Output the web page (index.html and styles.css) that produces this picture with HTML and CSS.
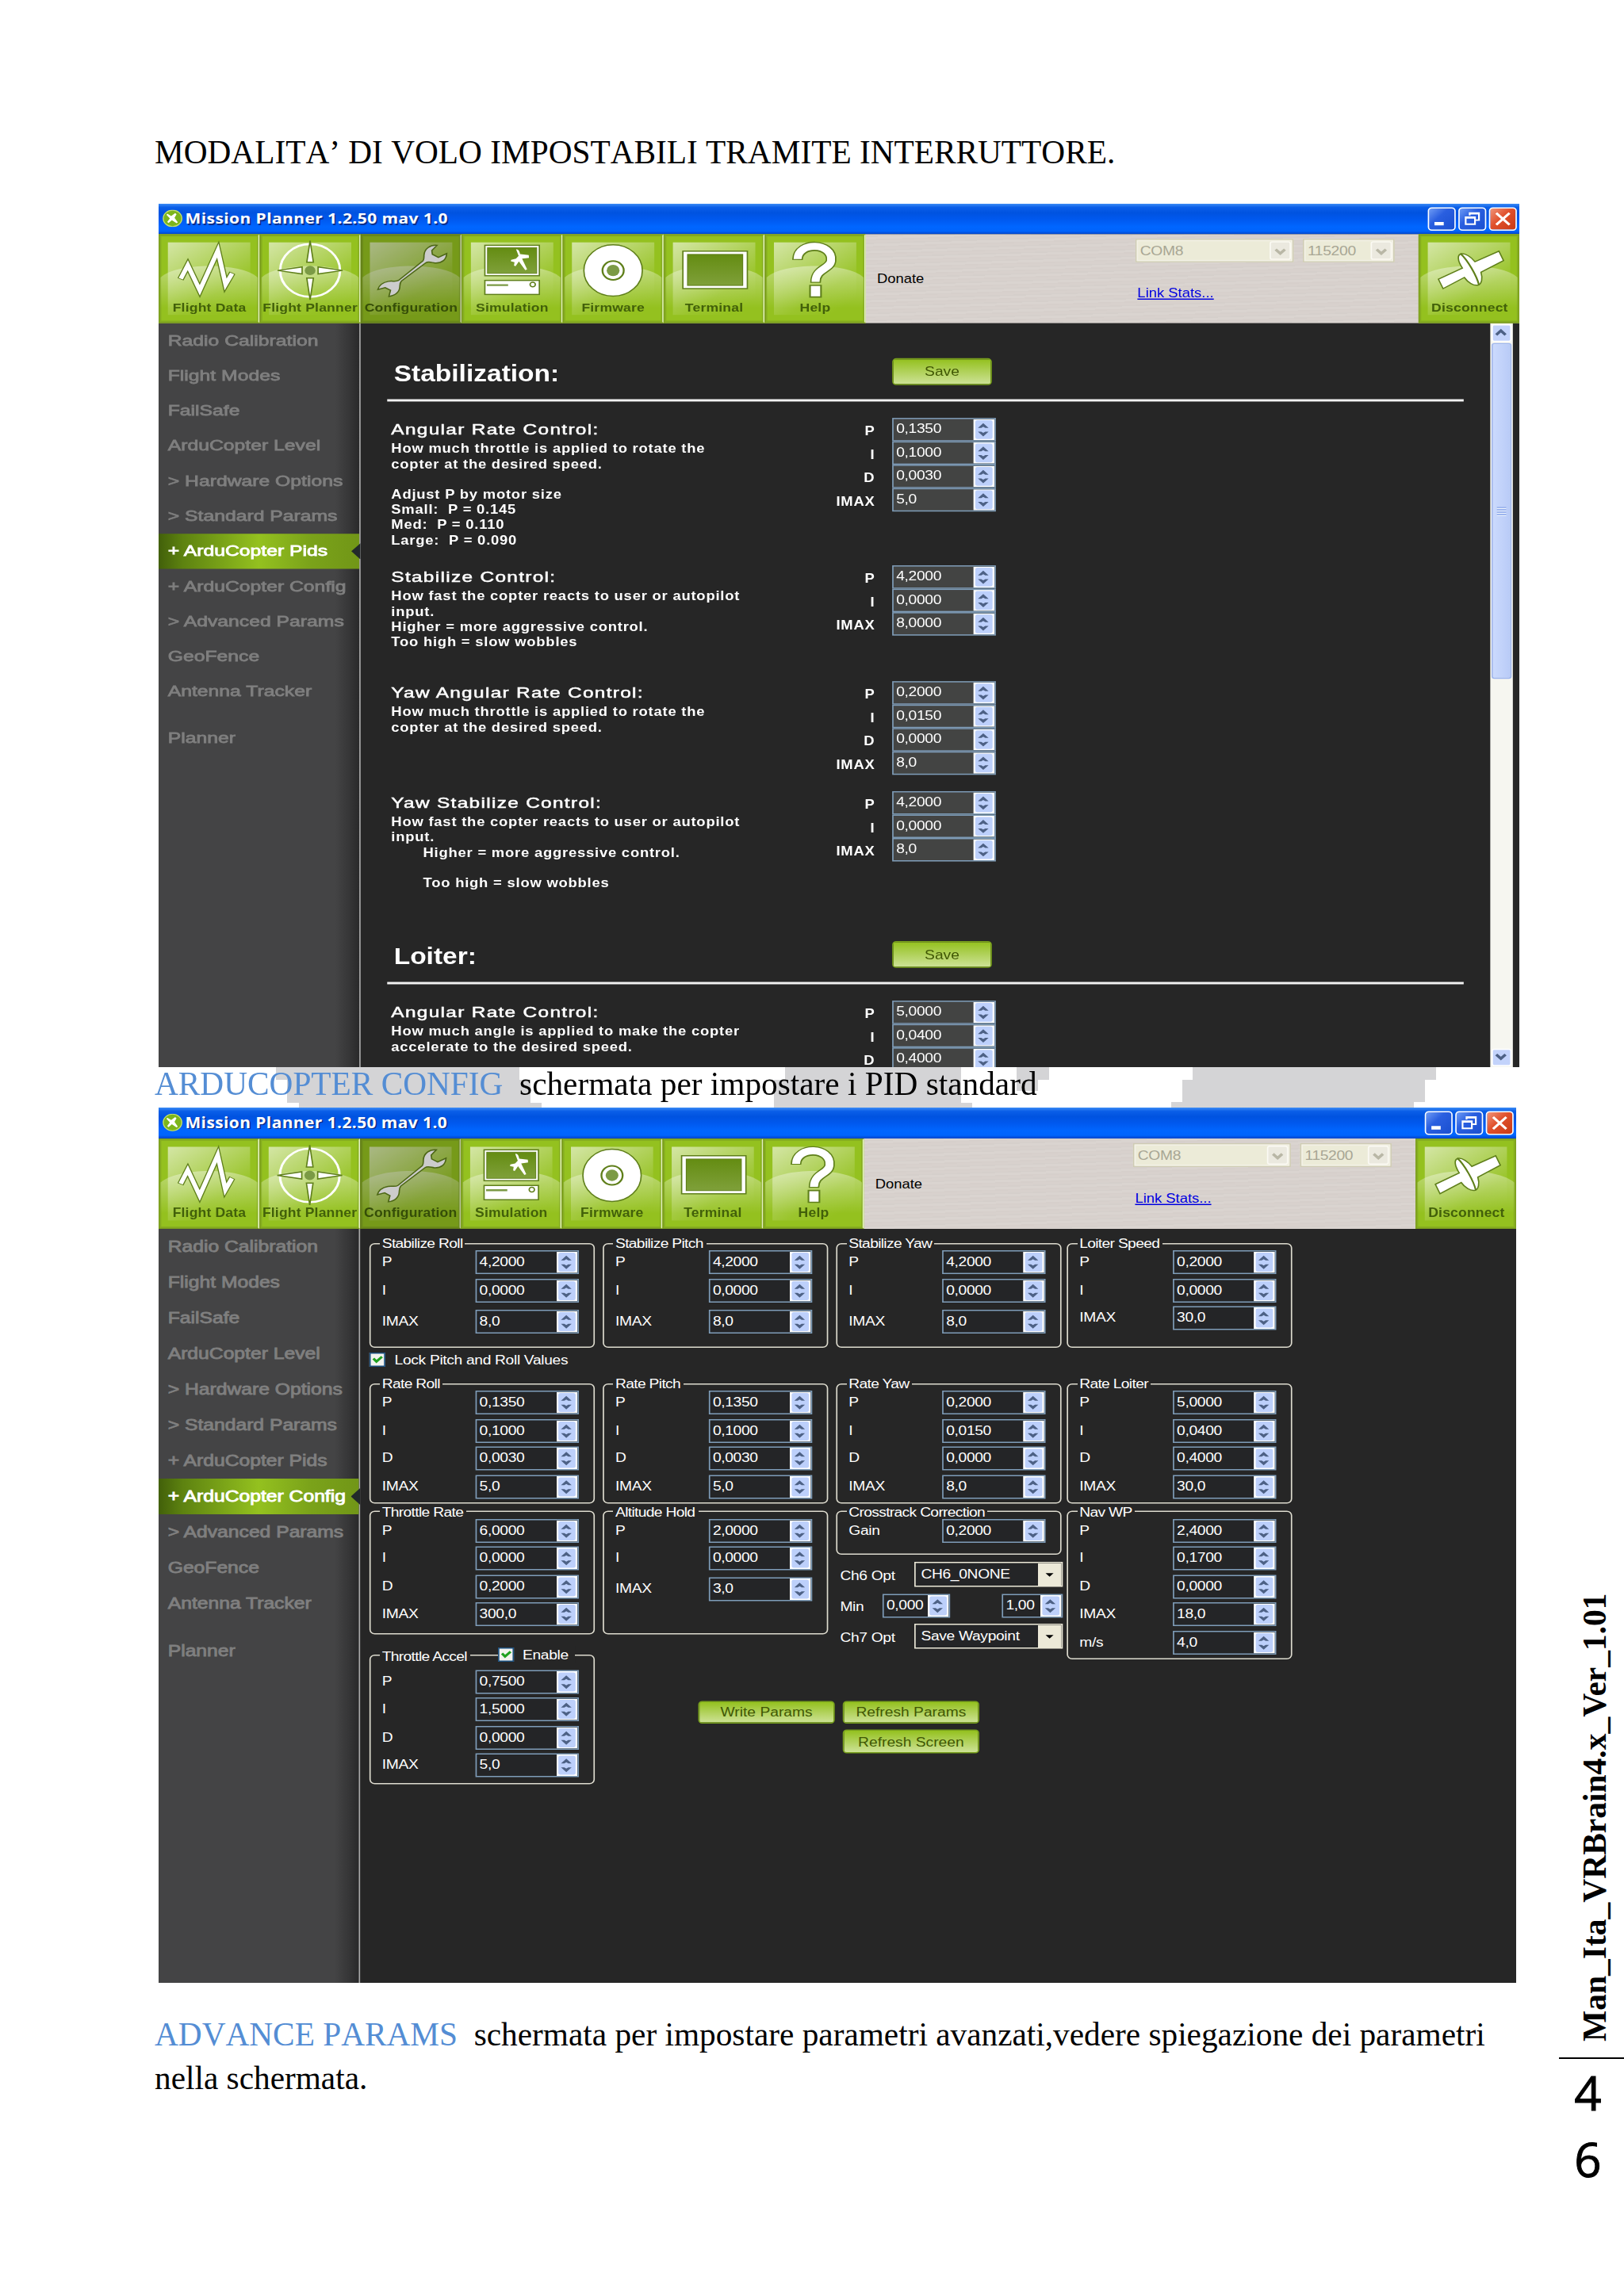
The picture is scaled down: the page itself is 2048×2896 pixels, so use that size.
FILE: index.html
```html
<!DOCTYPE html>
<html lang="it">
<head>
<meta charset="UTF-8" />
<title>Man_Ita_VRBrain4.x_Ver_1.01</title>
<link rel="stylesheet" href="styles.css">
</head>
<body>

<!-- shared icons -->
<svg class="defs" width="0" height="0">
  <defs>
    <linearGradient id="shine" x1="0" y1="0" x2=".7" y2="1">
      <stop offset="0" stop-color="#fff" stop-opacity=".6" />
      <stop offset=".75" stop-color="#fff" stop-opacity=".06" />
      <stop offset="1" stop-color="#fff" stop-opacity="0" />
    </linearGradient>
    <linearGradient id="hill" x1="0" y1="0" x2="0" y2="1">
      <stop offset="0" stop-color="#fff" stop-opacity=".38" />
      <stop offset=".8" stop-color="#fff" stop-opacity="0" />
    </linearGradient>
    <linearGradient id="screen" x1="0" y1="0" x2="0" y2="1">
      <stop offset="0" stop-color="#648c12" />
      <stop offset="1" stop-color="#7fa03a" />
    </linearGradient>
  </defs>
  <symbol id="base" viewBox="0 0 76 76">
    <rect x="7" y="7" width="62" height="62" fill="url(#shine)" />
    <path d="M1.500 37C14 24 62 24 74.500 37V72H1.500z" fill="url(#hill)" />
  </symbol>
  <symbol id="i-data" viewBox="0 0 76 76">
    <path d="M16.500 38.500 22 26.500 31 48 44.600 14 50.400 43 55.500 33" fill="none" stroke="#5f7f1a" stroke-width="5" stroke-miterlimit="8" />
    <path d="M16.700 38 22 26.500 31 48 44.600 14 50.400 43 55.300 33.500" fill="none" stroke="#fff" stroke-width="3.400" stroke-miterlimit="8" />
  </symbol>
  <symbol id="i-planner" viewBox="0 0 76 76">
    <circle cx="38" cy="31" r="22.500" fill="none" stroke="#fff" stroke-width="1.800" />
    <g fill="#fff" stroke="#5f7f1a" stroke-width="1">
      <path d="M38 5.500 40.500 24h-5z" /><path d="M38 56 40.500 37.500h-5z" />
      <path d="M13.500 31 32 28v6z" /><path d="M62.500 31 44 28v6z" />
    </g>
    <circle cx="38" cy="31" r="4" fill="#7b9a45" />
  </symbol>
  <symbol id="i-config" viewBox="0 0 76 76">
    <path d="M57.500 9.500c-5-.6-9.500 3-9.800 8.500-.1 2 .2 3.500-.8 4.800L28.500 39.500c-2 1.400-4.500.2-7.500.8-4 .8-7 3-8 7l5.500-1.600 4 2.300-1.200 5.200c5-.6 8-4 8.200-8.200.1-2.200 0-3.600 1.200-5L49 24.500c2-1.500 4.500-.2 7 .1 5 .3 8.500-2.600 8.800-8.100l-6.300 3.300-4.500-2.600-.4-3.200z" fill="#fff" stroke="#5f7f1a" stroke-width="1" />
  </symbol>
  <symbol id="i-sim" viewBox="0 0 76 76">
    <rect x="17.500" y="9.500" width="41" height="26" fill="#fff" stroke="#5f7f1a" />
    <rect x="19.500" y="11.500" width="37" height="22" fill="url(#screen)" stroke="#5f7f1a" stroke-width=".6" />
    <path d="M41 13c1.500-.5 2.500 1 3 4l6.500.8.2 2.400-5.200.8 3.800 9-1.400.7-4.800-7.400-2.500 4-1.200-.4.400-3-2.800-.8.3-1.200 3.600-.9 2-2.400z" fill="#fff" />
    <rect x="17.500" y="39.500" width="41" height="12" fill="#fff" stroke="#5f7f1a" />
    <path d="M19 43.500h16" stroke="#7b9a45" stroke-width="1.600" />
    <circle cx="53.500" cy="43" r="2" fill="none" stroke="#5f7f1a" stroke-width="1" />
  </symbol>
  <symbol id="i-firm" viewBox="0 0 76 76">
    <circle cx="38" cy="31" r="22" fill="#fff" stroke="#5f7f1a" />
    <circle cx="38" cy="31" r="8" fill="#fff" stroke="#5f7f1a" stroke-width="1.400" />
    <circle cx="38" cy="31" r="4.800" fill="#7b9a45" />
  </symbol>
  <symbol id="i-term" viewBox="0 0 76 76">
    <rect x="14.500" y="14.500" width="48.500" height="32" fill="#fff" stroke="#5f7f1a" />
    <rect x="18" y="17.300" width="41.500" height="26.500" fill="url(#screen)" stroke="#5f7f1a" stroke-width=".7" />
  </symbol>
  <symbol id="i-help" viewBox="0 0 76 76">
    <g fill="none" stroke-linejoin="round">
      <path d="M24.700 22C25 6 51.500 7 50 22.500C49.500 30 38.300 29 38.300 41.500" stroke="#5f7f1a" stroke-width="8" />
      <path d="M38.300 43.200v11" stroke="#5f7f1a" stroke-width="9.500" />
      <path d="M24.800 21.300C25 6 51.500 7 50 22.500C49.500 30 38.300 29 38.300 40.700" stroke="#fff" stroke-width="6" />
      <path d="M38.300 44.300v8.800" stroke="#fff" stroke-width="7" />
    </g>
  </symbol>
  <symbol id="i-disc" viewBox="0 0 76 76">
    <path d="M15 38.500 33 29 C29 22 29.500 18 31.500 17C35 15.500 40 20 42.500 23.500L60.500 14.500 64 22.500 47 32.500C48.500 38 47.500 42.500 45 43.500C41.500 44.500 37 41 34.500 37L18.500 46.500z" fill="#fff" stroke="#5f7f1a" stroke-width="1" />
    <path d="M31.500 16.500C37 22 44 36 45.500 43.500" fill="none" stroke="#5f7f1a" stroke-width="1.300" />
  </symbol>
  <symbol id="i-app" viewBox="0 0 15 15">
    <circle cx="7.500" cy="7.500" r="7" fill="#7cb51c" stroke="#c6e26a" stroke-width=".8" />
    <path d="M3.500 3.500 6.500 5.500 9.500 3l1 1L9 7l2.500 4-1 .6L7 9 4.500 11.500l-1-1L5.500 7.500 3 4.500z" fill="#fff" />
  </symbol>
  <symbol id="i-chev" viewBox="0 0 10 10">
    <path d="M1.500 3 5 6.500 8.500 3" fill="none" stroke="currentColor" stroke-width="2.200" />
  </symbol>
</svg>

<div class="page">
<main class="content">

  <p class="lead">MODALITA’ DI VOLO IMPOSTABILI TRAMITE INTERRUTTORE.</p>

  <!-- ARDUCOPTER PIDS -->
  <div class="shot shot-pids">
    <div class="window">
      <div class="titlebar">
        <svg class="app"><use href="#i-app" /></svg>
        <span class="title">Mission Planner 1.2.50 mav 1.0</span>
        <span class="wbtn"><svg viewBox="0 0 19 18"><path d="M4 13h7" stroke="#fff" stroke-width="3" /></svg></span>
        <span class="wbtn"><svg viewBox="0 0 19 18"><path d="M7.500 6V4h7v6H12M4.500 7.500h7v6h-7zM4.500 8h7M7.500 4.500h7" fill="none" stroke="#fff" stroke-width="1.300" /></svg></span>
        <span class="wbtn close"><svg viewBox="0 0 19 18"><path d="M4.500 4l10 10M14.500 4l-10 10" stroke="#fff" stroke-width="2" /></svg></span>
      </div>
      <div class="toolbar">
        <div class="tool"><svg><use href="#base" /><use href="#i-data" /></svg><span>Flight Data</span></div>
        <div class="tool"><svg><use href="#base" /><use href="#i-planner" /></svg><span>Flight Planner</span></div>
        <div class="tool on"><svg><use href="#base" /><use href="#i-config" /></svg><span>Configuration</span></div>
        <div class="tool"><svg><use href="#base" /><use href="#i-sim" /></svg><span>Simulation</span></div>
        <div class="tool"><svg><use href="#base" /><use href="#i-firm" /></svg><span>Firmware</span></div>
        <div class="tool"><svg><use href="#base" /><use href="#i-term" /></svg><span>Terminal</span></div>
        <div class="tool"><svg><use href="#base" /><use href="#i-help" /></svg><span>Help</span></div>
        <span class="donate">Donate</span>
        <div class="link">
          <div class="ports">
            <span class="port">COM8<b><svg><use href="#i-chev" /></svg></b></span>
            <span class="port baud">115200<b><svg><use href="#i-chev" /></svg></b></span>
          </div>
          <a class="stats">Link Stats...</a>
        </div>
        <div class="tool last"><svg><use href="#base" /><use href="#i-disc" /></svg><span>Disconnect</span></div>
      </div>
      <div class="client">
        <ul class="side">
          <li><span>Radio Calibration</span></li>
          <li><span>Flight Modes</span></li>
          <li><span>FailSafe</span></li>
          <li><span>ArduCopter Level</span></li>
          <li><span>&gt; Hardware Options</span></li>
          <li><span>&gt; Standard Params</span></li>
          <li class="active"><span>+ ArduCopter Pids</span></li>
          <li><span>+ ArduCopter Config</span></li>
          <li><span>&gt; Advanced Params</span></li>
          <li><span>GeoFence</span></li>
          <li><span>Antenna Tracker</span></li>
          <li class="planner"><span>Planner</span></li>
        </ul>
        <div class="pids">
          <div class="group-head"><h2>Stabilization:</h2><button>Save</button></div>
          <section class="pid s1">
            <div class="text">
              <h3>Angular Rate Control:</h3>
              <p>How much throttle is applied to rotate the
copter at the desired speed.

Adjust P by motor size
Small:  P = 0.145
Med:  P = 0.110
Large:  P = 0.090</p>
            </div>
            <div class="labels"><b>P</b><b>I</b><b>D</b><b>IMAX</b></div>
            <div class="spins"><span class="spin">0,1350</span><span class="spin">0,1000</span><span class="spin">0,0030</span><span class="spin">5,0</span></div>
          </section>
          <section class="pid s2">
            <div class="text">
              <h3>Stabilize Control:</h3>
              <p>How fast the copter reacts to user or autopilot
input.
Higher = more aggressive control.
Too high = slow wobbles</p>
            </div>
            <div class="labels"><b>P</b><b>I</b><b>IMAX</b></div>
            <div class="spins"><span class="spin">4,2000</span><span class="spin">0,0000</span><span class="spin">8,0000</span></div>
          </section>
          <section class="pid s3">
            <div class="text">
              <h3>Yaw Angular Rate Control:</h3>
              <p>How much throttle is applied to rotate the
copter at the desired speed.</p>
            </div>
            <div class="labels"><b>P</b><b>I</b><b>D</b><b>IMAX</b></div>
            <div class="spins"><span class="spin">0,2000</span><span class="spin">0,0150</span><span class="spin">0,0000</span><span class="spin">8,0</span></div>
          </section>
          <section class="pid s4">
            <div class="text">
              <h3>Yaw Stabilize Control:</h3>
              <p>How fast the copter reacts to user or autopilot
input.</p>
              <p class="indent">Higher = more aggressive control.

Too high = slow wobbles</p>
            </div>
            <div class="labels"><b>P</b><b>I</b><b>IMAX</b></div>
            <div class="spins"><span class="spin">4,2000</span><span class="spin">0,0000</span><span class="spin">8,0</span></div>
          </section>
          <div class="group-head second"><h2>Loiter:</h2><button>Save</button></div>
          <section class="pid s5">
            <div class="text">
              <h3>Angular Rate Control:</h3>
              <p>How much angle is applied to make the copter
accelerate to the desired speed.</p>
            </div>
            <div class="labels"><b>P</b><b>I</b><b>D</b></div>
            <div class="spins"><span class="spin">5,0000</span><span class="spin">0,0400</span><span class="spin">0,4000</span></div>
          </section>
        </div>
        <div class="scroll">
          <span class="arrow up"><svg><use href="#i-chev" /></svg></span>
          <span class="thumb"></span>
          <span class="arrow down"><svg><use href="#i-chev" /></svg></span>
        </div>
      </div>
    </div>
  </div>

  <div class="caption">
    <svg class="watermark" viewBox="0 0 1720 51">
      <path d="M152 0H459V16H473V45H487V51H181V45H166V16H152z" />
      <path d="M794 0H1016V45H1030V51H780V16H794z" />
      <path d="M1086 0H1127V16H1113V30H1086z" />
      <path d="M1308 0H1615V16H1601V44H1587V51H1281V44H1295V16H1308z" />
    </svg>
    <p><em>ARDUCOPTER CONFIG</em>&nbsp; schermata per impostare i PID standard</p>
  </div>

  <!-- ARDUCOPTER CONFIG -->
  <div class="shot shot-config">
    <div class="window">
      <div class="titlebar">
        <svg class="app"><use href="#i-app" /></svg>
        <span class="title">Mission Planner 1.2.50 mav 1.0</span>
        <span class="wbtn"><svg viewBox="0 0 19 18"><path d="M4 13h7" stroke="#fff" stroke-width="3" /></svg></span>
        <span class="wbtn"><svg viewBox="0 0 19 18"><path d="M7.500 6V4h7v6H12M4.500 7.500h7v6h-7zM4.500 8h7M7.500 4.500h7" fill="none" stroke="#fff" stroke-width="1.300" /></svg></span>
        <span class="wbtn close"><svg viewBox="0 0 19 18"><path d="M4.500 4l10 10M14.500 4l-10 10" stroke="#fff" stroke-width="2" /></svg></span>
      </div>
      <div class="toolbar">
        <div class="tool"><svg><use href="#base" /><use href="#i-data" /></svg><span>Flight Data</span></div>
        <div class="tool"><svg><use href="#base" /><use href="#i-planner" /></svg><span>Flight Planner</span></div>
        <div class="tool on"><svg><use href="#base" /><use href="#i-config" /></svg><span>Configuration</span></div>
        <div class="tool"><svg><use href="#base" /><use href="#i-sim" /></svg><span>Simulation</span></div>
        <div class="tool"><svg><use href="#base" /><use href="#i-firm" /></svg><span>Firmware</span></div>
        <div class="tool"><svg><use href="#base" /><use href="#i-term" /></svg><span>Terminal</span></div>
        <div class="tool"><svg><use href="#base" /><use href="#i-help" /></svg><span>Help</span></div>
        <span class="donate">Donate</span>
        <div class="link">
          <div class="ports">
            <span class="port">COM8<b><svg><use href="#i-chev" /></svg></b></span>
            <span class="port baud">115200<b><svg><use href="#i-chev" /></svg></b></span>
          </div>
          <a class="stats">Link Stats...</a>
        </div>
        <div class="tool last"><svg><use href="#base" /><use href="#i-disc" /></svg><span>Disconnect</span></div>
      </div>
      <div class="client">
        <ul class="side">
          <li><span>Radio Calibration</span></li>
          <li><span>Flight Modes</span></li>
          <li><span>FailSafe</span></li>
          <li><span>ArduCopter Level</span></li>
          <li><span>&gt; Hardware Options</span></li>
          <li><span>&gt; Standard Params</span></li>
          <li><span>+ ArduCopter Pids</span></li>
          <li class="active"><span>+ ArduCopter Config</span></li>
          <li><span>&gt; Advanced Params</span></li>
          <li><span>GeoFence</span></li>
          <li><span>Antenna Tracker</span></li>
          <li class="planner"><span>Planner</span></li>
        </ul>
        <div class="config">
          <div class="col">
            <fieldset class="r1">
              <legend>Stabilize Roll</legend>
              <div class="row">P<span class="spin">4,2000</span></div>
              <div class="row">I<span class="spin">0,0000</span></div>
              <div class="row low">IMAX<span class="spin">8,0</span></div>
            </fieldset>
            <div class="check"><i></i>Lock Pitch and Roll Values</div>
            <fieldset class="r2">
              <legend>Rate Roll</legend>
              <div class="row">P<span class="spin">0,1350</span></div>
              <div class="row">I<span class="spin">0,1000</span></div>
              <div class="row">D<span class="spin">0,0030</span></div>
              <div class="row">IMAX<span class="spin">5,0</span></div>
            </fieldset>
            <fieldset class="r3">
              <legend>Throttle Rate</legend>
              <div class="row">P<span class="spin">6,0000</span></div>
              <div class="row">I<span class="spin">0,0000</span></div>
              <div class="row">D<span class="spin">0,2000</span></div>
              <div class="row">IMAX<span class="spin">300,0</span></div>
            </fieldset>
            <fieldset class="accel">
              <legend>Throttle Accel</legend>
              <div class="check enable"><i></i>Enable</div>
              <div class="row">P<span class="spin">0,7500</span></div>
              <div class="row">I<span class="spin">1,5000</span></div>
              <div class="row">D<span class="spin">0,0000</span></div>
              <div class="row">IMAX<span class="spin">5,0</span></div>
            </fieldset>
          </div>
          <div class="rest">
            <div class="cols">
              <div class="col">
                <fieldset class="r1">
                  <legend>Stabilize Pitch</legend>
                  <div class="row">P<span class="spin">4,2000</span></div>
                  <div class="row">I<span class="spin">0,0000</span></div>
                  <div class="row low">IMAX<span class="spin">8,0</span></div>
                </fieldset>
                <fieldset class="r2 after">
                  <legend>Rate Pitch</legend>
                  <div class="row">P<span class="spin">0,1350</span></div>
                  <div class="row">I<span class="spin">0,1000</span></div>
                  <div class="row">D<span class="spin">0,0030</span></div>
                  <div class="row">IMAX<span class="spin">5,0</span></div>
                </fieldset>
                <fieldset class="r3">
                  <legend>Altitude Hold</legend>
                  <div class="row">P<span class="spin">2,0000</span></div>
                  <div class="row">I<span class="spin">0,0000</span></div>
                  <div class="row low">IMAX<span class="spin">3,0</span></div>
                </fieldset>
              </div>
              <div class="col">
                <fieldset class="r1">
                  <legend>Stabilize Yaw</legend>
                  <div class="row">P<span class="spin">4,2000</span></div>
                  <div class="row">I<span class="spin">0,0000</span></div>
                  <div class="row low">IMAX<span class="spin">8,0</span></div>
                </fieldset>
                <fieldset class="r2 after">
                  <legend>Rate Yaw</legend>
                  <div class="row">P<span class="spin">0,2000</span></div>
                  <div class="row">I<span class="spin">0,0150</span></div>
                  <div class="row">D<span class="spin">0,0000</span></div>
                  <div class="row">IMAX<span class="spin">8,0</span></div>
                </fieldset>
                <fieldset class="cross">
                  <legend>Crosstrack Correction</legend>
                  <div class="row">Gain<span class="spin">0,2000</span></div>
                </fieldset>
                <div class="opt">Ch6 Opt<span class="combo">CH6_0NONE</span></div>
                <div class="opt minmax">Min<span class="spin lo">0,000</span><span class="spin hi">1,00</span></div>
                <div class="opt">Ch7 Opt<span class="combo">Save Waypoint</span></div>
              </div>
              <div class="col nav">
                <fieldset class="r1">
                  <legend>Loiter Speed</legend>
                  <div class="row">P<span class="spin">0,2000</span></div>
                  <div class="row">I<span class="spin">0,0000</span></div>
                  <div class="row">IMAX<span class="spin">30,0</span></div>
                </fieldset>
                <fieldset class="r2 after">
                  <legend>Rate Loiter</legend>
                  <div class="row">P<span class="spin">5,0000</span></div>
                  <div class="row">I<span class="spin">0,0400</span></div>
                  <div class="row">D<span class="spin">0,4000</span></div>
                  <div class="row">IMAX<span class="spin">30,0</span></div>
                </fieldset>
                <fieldset class="wp">
                  <legend>Nav WP</legend>
                  <div class="row">P<span class="spin">2,4000</span></div>
                  <div class="row">I<span class="spin">0,1700</span></div>
                  <div class="row">D<span class="spin">0,0000</span></div>
                  <div class="row">IMAX<span class="spin">18,0</span></div>
                  <div class="row">m/s<span class="spin">4,0</span></div>
                </fieldset>
              </div>
            </div>
            <div class="actions">
              <button>Write Params</button>
              <div>
                <button>Refresh Params</button>
                <button>Refresh Screen</button>
              </div>
            </div>
          </div>
        </div>
      </div>
    </div>
  </div>

  <p class="closing"><em>ADVANCE PARAMS</em>&nbsp; schermata per impostare parametri avanzati,vedere spiegazione dei parametri<br>nella schermata.</p>

</main>

<aside class="margin">
  <div class="doc">Man_Ita_VRBrain4.x_Ver_1.01</div>
  <div class="num">4<br>6</div>
</aside>
</div>

</body>
</html>
```
FILE: styles.css
```css
* {
  box-sizing: border-box;
}
body {
  margin: 0;
  background: #fff;
  color: #000;
  font-family: "Liberation Serif", "Times New Roman", serif;
}
.defs {
  position: absolute;
}
.page {
  display: flex;
  width: 2048px;
  height: 2896px;
  overflow: hidden;
}
.content {
  width: 1966px;
  padding: 165px 0 0 195px;
}
.content p {
  margin: 0;
}
.lead, .caption, .closing {
  font-size: 41.3px;
  font-kerning: none;
  line-height: 55px;
  white-space: nowrap;
}
.lead {
  height: 92px;
}
em {
  font-style: normal;
  color: #548dd4;
}
.caption {
  position: relative;
  height: 51px;
  line-height: 43px;
}
.caption p {
  position: relative;
}
.watermark {
  position: absolute;
  left: 1px;
  top: 0;
  width: 1720px;
  height: 51px;
  fill: #d4d4d6;
}
.content .closing {
  margin-top: 38px;
}

/* right margin with rotated title and page number */
.margin {
  width: 82px;
  padding-top: 2006px;
}
.doc {
  width: 82px;
  height: 589px;
  padding-top: 20px;
  writing-mode: vertical-rl;
  transform: rotate(180deg);
  font-size: 41.5px;
  font-weight: bold;
  line-height: 90px;
  white-space: nowrap;
}
.num {
  border-top: 2px solid #000;
  padding-right: 9px;
  font-family: "Open Sans", sans-serif;
  font-size: 60px;
  line-height: 84px;
  text-align: center;
  -webkit-text-stroke: 1px;
}

/* the XP windows are laid out at 1024px and stretched to the page */
.shot {
  margin-left: 5px;
  overflow: hidden;
}
.shot-pids {
  width: 1716px;
  height: 1089px;
}
.shot-config {
  width: 1712px;
  height: 1104px;
}
.window {
  width: 1024px;
  height: 738px;
  transform-origin: 0 0;
  background: #262626;
  color: #fff;
  font: 11.5px/14px "Liberation Sans", Arial, sans-serif;
  letter-spacing: -.2px;
}
.shot-pids .window {
  transform: scale(1.676, 1.476);
}
.shot-config .window {
  transform: scale(1.672, 1.5);
}

.titlebar {
  display: flex;
  align-items: center;
  gap: 2px;
  height: 26px;
  padding: 0 2px 1px 3px;
  background: linear-gradient(#3c8cf5 0, #0a5ee8 12%, #0053e0 30%, #0058ee 50%, #0066ff 75%, #0064fc 90%, #0043c8 100%);
}
.app {
  width: 15px;
  height: 15px;
}
.title {
  flex: 1;
  padding-top: 1px;
  font: bold 12.5px/20px "Open Sans", sans-serif;
  letter-spacing: .26px;
  text-shadow: 1px 1px #0a2f8c;
}
.wbtn {
  width: 21px;
  height: 20px;
  border: 1px solid #fff;
  border-radius: 3px;
  background: linear-gradient(135deg, #6f9cf5, #2a5fe0 40%, #1a4fd0);
}
.wbtn svg {
  display: block;
  width: 19px;
  height: 18px;
}
.close {
  background: linear-gradient(135deg, #f0957a, #e0502c 45%, #c83a14);
}

.toolbar {
  display: flex;
  height: 76px;
  background: repeating-linear-gradient(178deg, #d8d1cd 0 2px, #d5cfcb 2px 3px, #dad4d0 3px 5px, #d6cfcb 5px 6px);
}
.tool {
  position: relative;
  width: 76px;
  height: 76px;
  border: 1px solid #7b9c1f;
  border-right: 1px solid #e3efc4;
  background: #94c11f;
  box-shadow: inset 0 0 0 1px #86ae20;
}
.tool:first-child {
  width: 75.500px;
}
.tool.on {
  filter: brightness(.8);
}
.tool.last {
  border-right-color: #7b9c1f;
}
.tool svg {
  display: block;
  width: 76px;
  height: 76px;
  margin: -1px;
}
/* caption printed over the lower part of the icon tile */
.tool span {
  position: absolute;
  left: -4px;
  right: -5px;
  bottom: 6px;
  color: #42600a;
  font-size: 10.5px;
  font-weight: bold;
  letter-spacing: .1px;
  text-align: center;
  white-space: nowrap;
}
.donate {
  width: 203px;
  padding: 30.500px 0 0 9px;
  color: #000;
  font-size: 11px;
  letter-spacing: 0;
}
.link {
  flex: 1;
  padding-top: 4px;
}
.ports {
  display: flex;
  gap: 7px;
}
.port {
  display: flex;
  justify-content: space-between;
  width: 119px;
  height: 20px;
  padding-left: 3px;
  border: 1px solid #cfccb4;
  outline: 1px solid #f3f1e6;
  outline-offset: -2px;
  background: #ecebd8;
  color: #a8a694;
  line-height: 18px;
}
.baud {
  width: 69px;
}
.port b {
  width: 16px;
  margin: 1px;
  border-radius: 2px;
  border: 1px solid #fbfaf4;
  background: #ebe9df;
  color: #b9b7a6;
}
.port svg {
  display: block;
  width: 10px;
  height: 14px;
  margin: 1px 2px;
}
.stats {
  display: block;
  margin: 19px 0 0 2px;
  color: #0000e0;
  font-size: 11px;
  letter-spacing: 0;
  text-decoration: underline;
}

.client {
  display: flex;
  height: 636px;
}
.side {
  width: 152px;
  margin: 0;
  padding: 0;
  list-style: none;
  border-right: 1px solid #a9a9a9;
  background: linear-gradient(90deg, #444445 0, #444445 88%, #363637 95%, #29292a 100%);
  color: #7f7f7f;
}
.side li {
  height: 30px;
  padding-left: 7px;
  font-size: 13px;
  line-height: 29px;
  letter-spacing: 0;
  white-space: nowrap;
}
.side span {
  display: inline-block;
  transform: scaleX(1.135);
  transform-origin: 0 0;
  -webkit-text-stroke: .55px;
}
.side .planner {
  margin-top: 10px;
}
.side .active {
  position: relative;
  background: linear-gradient(90deg, #42600a 0, #5d8210 12%, #94c11f 50%, #7ba31a 75%, #719617 100%);
  color: #fff;
}
/* notch pointing at the selected page */
.side .active::after {
  content: "";
  position: absolute;
  right: -1px;
  top: 8px;
  width: 7px;
  height: 14px;
  background: #22292b;
  clip-path: polygon(0 50%, 100% 0, 100% 100%);
}

button {
  display: block;
  padding: 0;
  border: 1px solid #79a11c;
  border-radius: 3px;
  background: linear-gradient(#94c11f, #cde296);
  color: #405704;
  font: inherit;
  letter-spacing: 0;
}

/* numeric up/down */
.spin {
  display: block;
  width: 78px;
  height: 20px;
  padding-left: 2px;
  border: 1px solid #7f9db9;
  background: #242527 url("data:image/svg+xml,%3Csvg xmlns='http://www.w3.org/2000/svg' width='16' height='18'%3E%3Crect width='16' height='18' fill='%23fff'/%3E%3Crect x='1.500' y='1' width='13' height='16' rx='1.500' fill='%23bdd0fb'/%3E%3Cpath d='M3.500 7.500 7.500 3.500 11.500 7.500H9L7.500 6.500 6 7.500zM3.500 10.800 7.500 14.800 11.500 10.800H9L7.500 11.800 6 10.800z' fill='%234d6185'/%3E%3C/svg%3E") no-repeat right center;
  line-height: 16px;
}

.pids {
  width: 830px;
  padding: 29.500px 0 0 20px;
}
.group-head {
  display: flex;
  width: 810px;
  height: 37.500px;
  padding-left: 5px;
  border-bottom: 2px solid #f2f2f2;
}
.group-head h2 {
  width: 375px;
  margin: 0;
  font-size: 20px;
  line-height: 27px;
  letter-spacing: 0;
}
.group-head button {
  width: 75px;
  height: 23px;
}
.pid {
  display: flex;
  padding-left: 3px;
}
.s1 {
  height: 139.500px;
  padding-top: 14px;
}
.s2 {
  height: 99px;
}
.s3 {
  height: 94.500px;
}
.s4 {
  height: 128px;
}
.second {
  height: 37px;
}
.s5 {
  padding-top: 14px;
}
.pid .text {
  width: 300px;
}
.pid h3 {
  margin: 2px 0;
  font-size: 13px;
  font-weight: normal;
  line-height: 16px;
  letter-spacing: .7px;
  white-space: nowrap;
  transform: scaleX(1.12);
  transform-origin: 0 0;
  -webkit-text-stroke: .35px;
}
.pid p {
  font-size: 11px;
  font-weight: bold;
  line-height: 13px;
  letter-spacing: .46px;
  white-space: pre;
}
.pid .indent {
  padding-left: 24px;
}
.labels {
  width: 64px;
  padding-top: 1px;
  text-align: right;
}
.labels b {
  display: block;
  height: 20px;
  font-size: 11px;
  line-height: 20px;
  letter-spacing: .4px;
}
.spins {
  margin-left: 13px;
}
.pids .spin {
  background-color: #434443;
}

.scroll {
  display: flex;
  flex-direction: column;
  width: 17px;
  margin-left: 20px;
  padding: 1px 1px 0;
  background: #f6f6f0;
}
.arrow {
  height: 15px;
  border: 1px solid #fff;
  border-radius: 2px;
  background: #c3d3fb;
  color: #4d6185;
}
.arrow svg {
  display: block;
  width: 10px;
  height: 10px;
  margin: 1px;
}
.up svg {
  transform: scaleY(-1);
}
.thumb {
  height: 287px;
  margin-top: 1px;
  border: 1px solid #9db5ee;
  border-radius: 2px;
  background: repeating-linear-gradient(#9db5ee 0 1px, #eef4fe 1px 2px) no-repeat center / 7px 8px, linear-gradient(90deg, #cbdafd, #b9cbf7);
}
.down {
  margin-top: auto;
  margin-bottom: 1px;
}

.config {
  display: flex;
  gap: 6px;
  padding: 5px 0 0 7px;
}
.col {
  width: 170px;
}
.cols {
  display: flex;
  gap: 6px;
}
.nav {
  margin-left: -2px;
}
fieldset {
  position: relative;
  min-width: 0;
  margin: 0;
  padding: 0 0 0 8.500px;
  border: 1px solid #dedccf;
  border-radius: 4px;
}
legend {
  height: 14px;
  margin-left: -2px;
  padding: 0 2px;
  letter-spacing: -.4px;
}
.r1 {
  height: 94.500px;
}
.r2 {
  height: 107.500px;
}
.after {
  margin-top: 23.500px;
}
.r3 {
  height: 110px;
}
.accel {
  height: 115px;
  margin-top: 11px;
}
.cross {
  height: 43px;
}
.wp {
  height: 131px;
}
.row {
  display: flex;
  justify-content: space-between;
  height: 20px;
  margin: 0 11px 3.500px 0;
  line-height: 18px;
}
legend + .row {
  margin-top: -.8px;
}
.row .spin {
  line-height: 16px;
}
.low {
  margin-top: 6.200px;
}
.check {
  display: flex;
  align-items: center;
  gap: 7px;
  height: 12px;
  margin: 4px 0 7.500px;
}
.check i {
  width: 12px;
  height: 12px;
  border: 1px solid #1c5180;
  background: #f3f3ef url("data:image/svg+xml,%3Csvg xmlns='http://www.w3.org/2000/svg' viewBox='0 0 10 10'%3E%3Cpath d='M2 4 4.300 6.500 8.500 2.500' fill='none' stroke='%2321a121' stroke-width='2'/%3E%3C/svg%3E");
}
/* sits on the top border of its group */
.enable {
  position: absolute;
  left: 95.500px;
  top: -11px;
  width: 58px;
  height: 14px;
  margin: -4px 0 0;
  background: #262626;
}
.accel .enable + .row {
  margin-top: 5px;
}
.opt {
  display: flex;
  align-items: center;
  justify-content: space-between;
  width: 171px;
  height: 21px;
  margin-top: 6.500px;
  padding-left: 3px;
}
.opt + .opt {
  margin-top: 5px;
}
.combo {
  width: 112px;
  height: 21px;
  padding-left: 4px;
  border: 1px solid #ece9d8;
  background: #242527 url("data:image/svg+xml,%3Csvg xmlns='http://www.w3.org/2000/svg' width='18' height='19'%3E%3Crect width='18' height='19' fill='%23ece9d8'/%3E%3Cpath d='M6 8.500h6l-3 3z' fill='%23000'/%3E%3C/svg%3E") no-repeat right center;
  line-height: 18px;
}
.lo {
  width: 51px;
  margin: 0 39px 0 auto;
}
.hi {
  width: 46px;
}
.actions {
  display: flex;
  gap: 6px;
  margin: 35px 0 0 72px;
}
.actions button {
  width: 103px;
  height: 19.500px;
  margin-bottom: 5px;
}
```
